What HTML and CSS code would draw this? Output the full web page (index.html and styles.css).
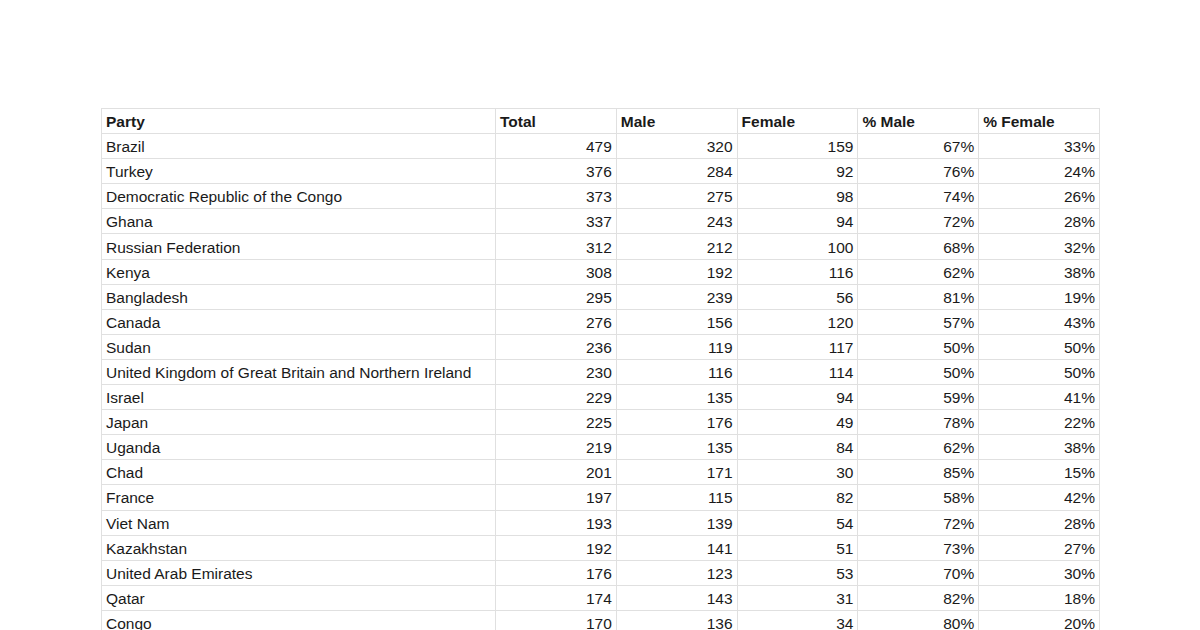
FILE: index.html
```html
<!DOCTYPE html>
<html>
<head>
<meta charset="utf-8">
<link rel="stylesheet" href="styles.css">
</head>
<body>
<div class="page">
<table class="sheet">
<colgroup>
<col class="c-party"><col class="c-num"><col class="c-num"><col class="c-num"><col class="c-num"><col class="c-num">
</colgroup>
<thead>
<tr><th>Party</th><th>Total</th><th>Male</th><th>Female</th><th>% Male</th><th>% Female</th></tr>
</thead>
<tbody>
<tr><td>Brazil</td><td>479</td><td>320</td><td>159</td><td>67%</td><td>33%</td></tr>
<tr><td>Turkey</td><td>376</td><td>284</td><td>92</td><td>76%</td><td>24%</td></tr>
<tr><td>Democratic Republic of the Congo</td><td>373</td><td>275</td><td>98</td><td>74%</td><td>26%</td></tr>
<tr><td>Ghana</td><td>337</td><td>243</td><td>94</td><td>72%</td><td>28%</td></tr>
<tr><td>Russian Federation</td><td>312</td><td>212</td><td>100</td><td>68%</td><td>32%</td></tr>
<tr><td>Kenya</td><td>308</td><td>192</td><td>116</td><td>62%</td><td>38%</td></tr>
<tr><td>Bangladesh</td><td>295</td><td>239</td><td>56</td><td>81%</td><td>19%</td></tr>
<tr><td>Canada</td><td>276</td><td>156</td><td>120</td><td>57%</td><td>43%</td></tr>
<tr><td>Sudan</td><td>236</td><td>119</td><td>117</td><td>50%</td><td>50%</td></tr>
<tr><td>United Kingdom of Great Britain and Northern Ireland</td><td>230</td><td>116</td><td>114</td><td>50%</td><td>50%</td></tr>
<tr><td>Israel</td><td>229</td><td>135</td><td>94</td><td>59%</td><td>41%</td></tr>
<tr><td>Japan</td><td>225</td><td>176</td><td>49</td><td>78%</td><td>22%</td></tr>
<tr><td>Uganda</td><td>219</td><td>135</td><td>84</td><td>62%</td><td>38%</td></tr>
<tr><td>Chad</td><td>201</td><td>171</td><td>30</td><td>85%</td><td>15%</td></tr>
<tr><td>France</td><td>197</td><td>115</td><td>82</td><td>58%</td><td>42%</td></tr>
<tr><td>Viet Nam</td><td>193</td><td>139</td><td>54</td><td>72%</td><td>28%</td></tr>
<tr><td>Kazakhstan</td><td>192</td><td>141</td><td>51</td><td>73%</td><td>27%</td></tr>
<tr><td>United Arab Emirates</td><td>176</td><td>123</td><td>53</td><td>70%</td><td>30%</td></tr>
<tr><td>Qatar</td><td>174</td><td>143</td><td>31</td><td>82%</td><td>18%</td></tr>
<tr><td>Congo</td><td>170</td><td>136</td><td>34</td><td>80%</td><td>20%</td></tr>
</tbody>
</table>
</div>
</body>
</html>
```
FILE: styles.css
```css
html, body {
  margin: 0;
  padding: 0;
  background: #ffffff;
}
body {
  font-family: "Liberation Sans", Arial, sans-serif;
  color: #1a1a1a;
  overflow: hidden;
  height: 630px;
}
.page {
  padding: 108px 0 0 101px;
}
.sheet {
  border-collapse: collapse;
  table-layout: fixed;
  width: 998px;
  font-size: 15.5px;
}
.c-party { width: 394px; }
.c-num { width: 120.8px; }
.sheet th,
.sheet td {
  border: 1px solid #e0e0e0;
  height: 25.1px;
  padding: 1px 4px 0 4px;
  line-height: 17px;
  white-space: nowrap;
  overflow: hidden;
  box-sizing: border-box;
  vertical-align: middle;
}
.sheet th {
  text-align: left;
  font-weight: bold;
}
.sheet td {
  text-align: right;
}
.sheet td:first-child {
  text-align: left;
}
```
